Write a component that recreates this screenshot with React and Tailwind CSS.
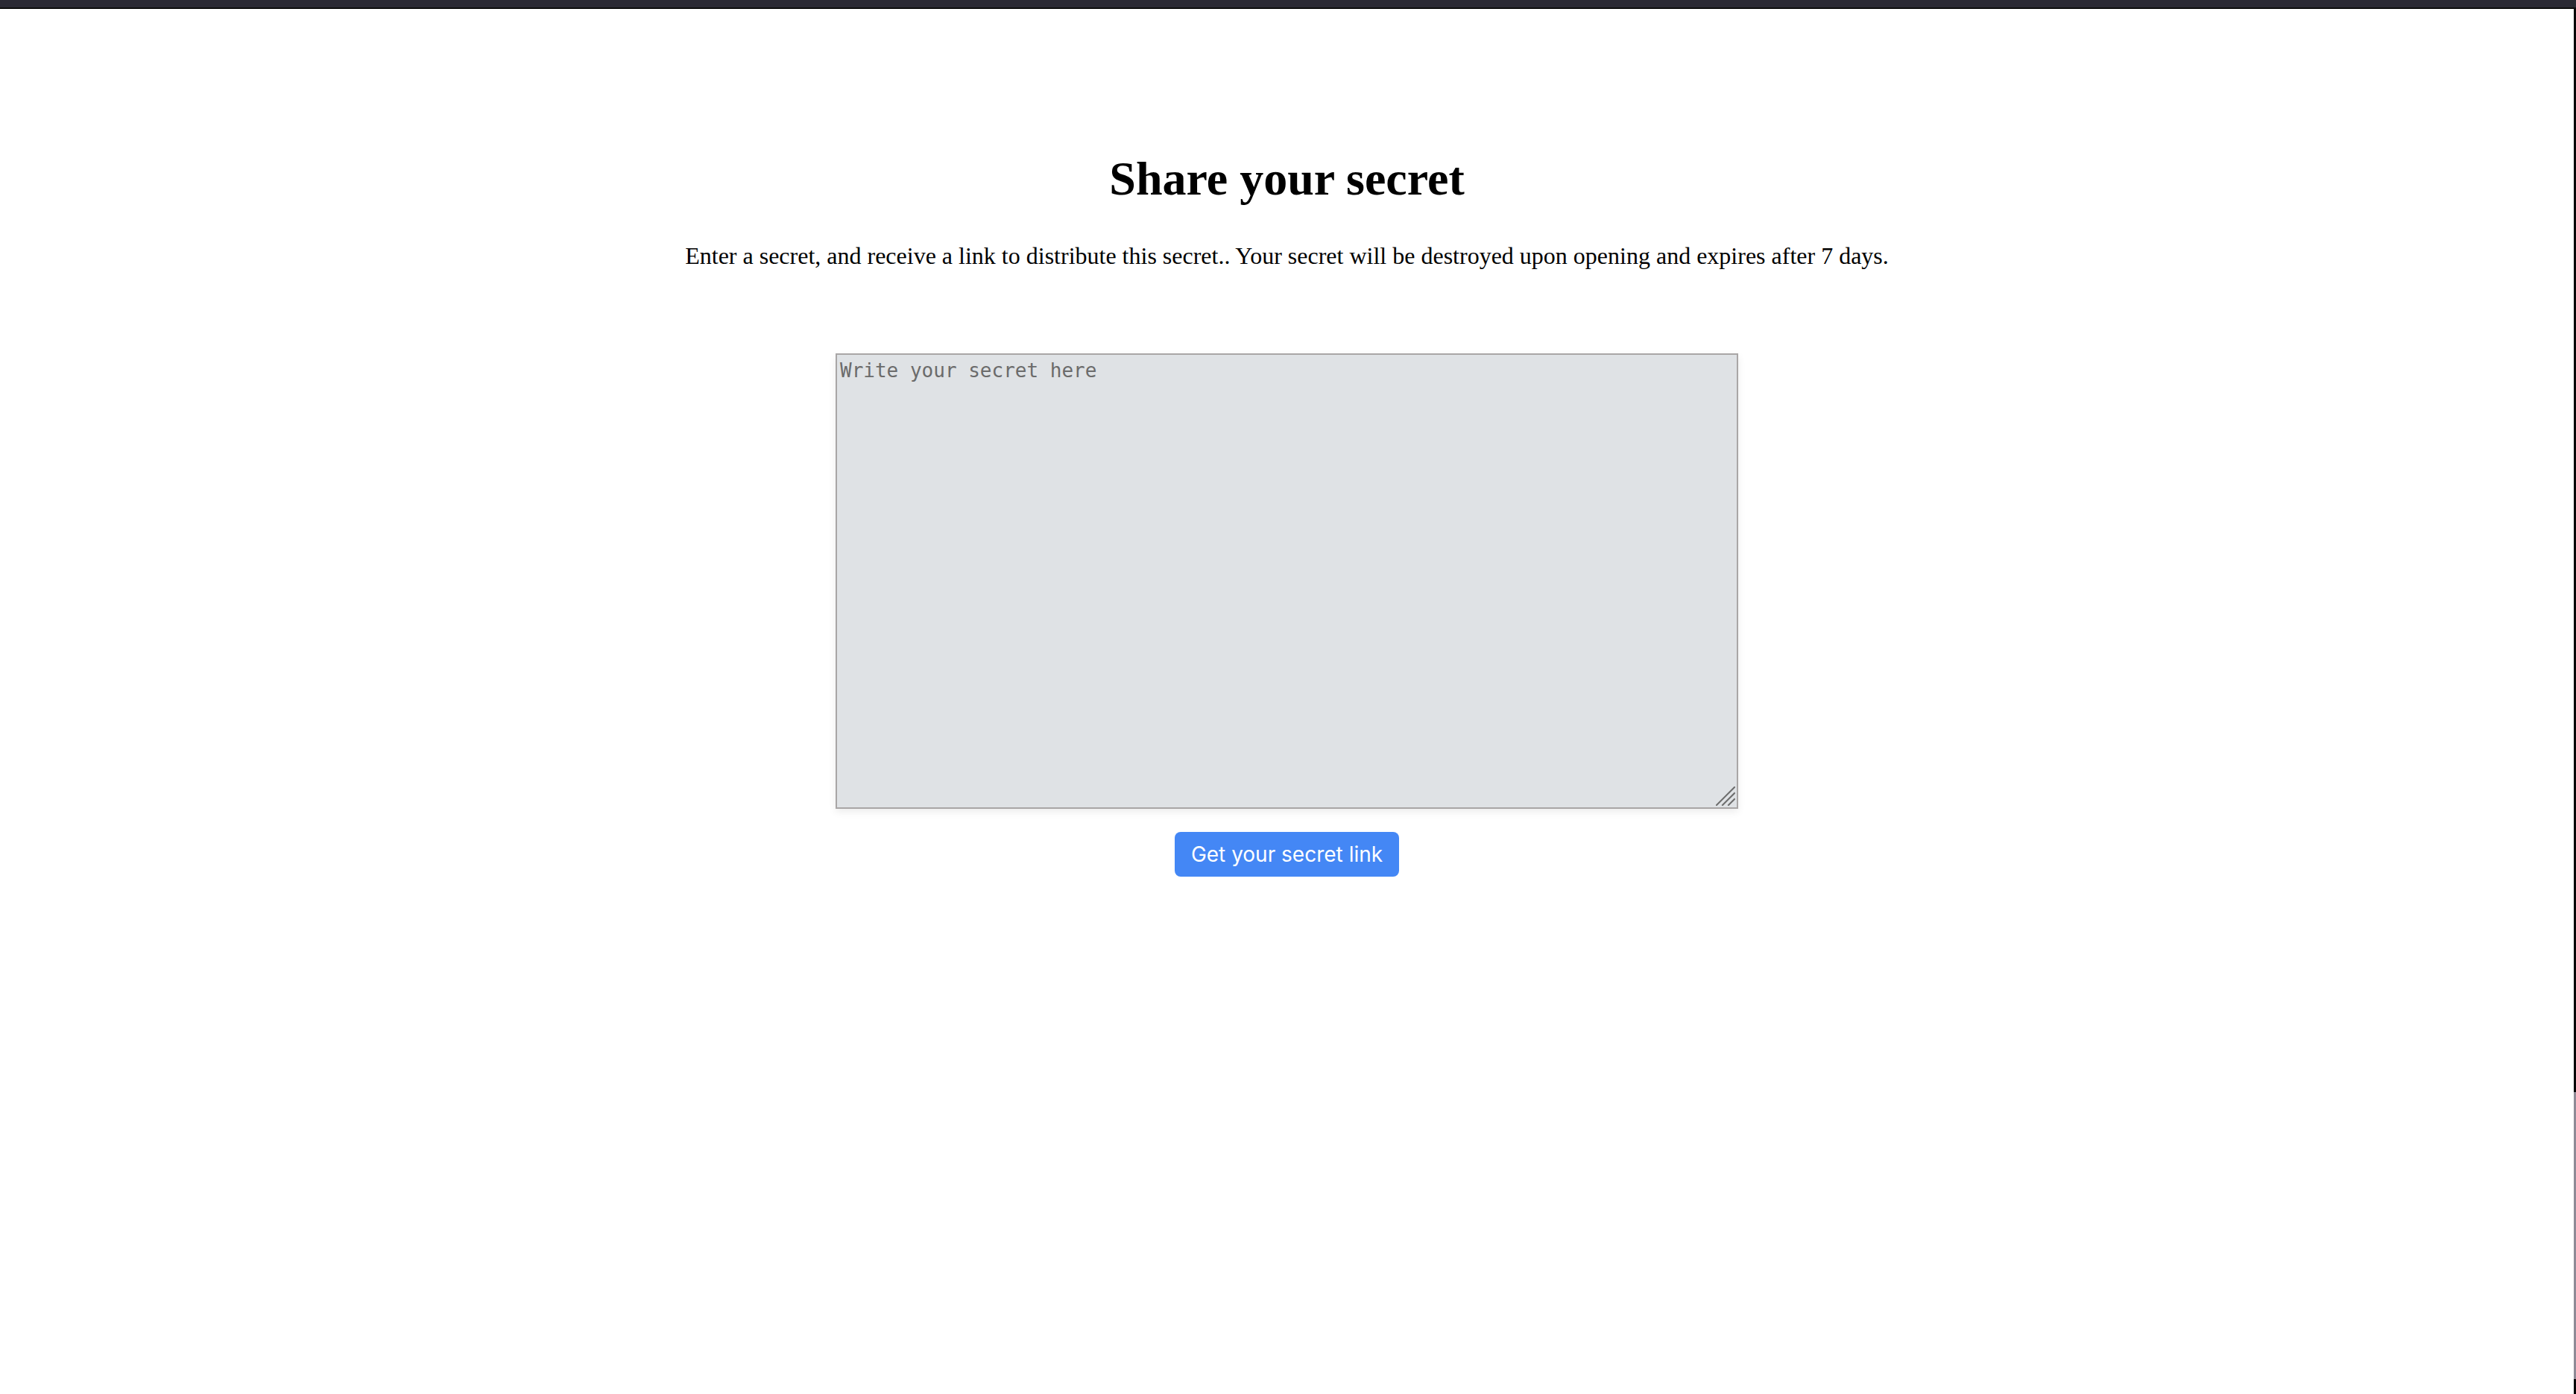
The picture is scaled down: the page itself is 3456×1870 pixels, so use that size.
import React from 'react';

const serif = { fontFamily: '"Liberation Serif", "Times New Roman", serif' };

function ResizeGrip() {
  return (
    <svg width="26" height="26" viewBox="0 0 26 26" className="pointer-events-none absolute bottom-[4px] right-[4px]">
      <g stroke="#6d6d6d" strokeWidth="2" strokeLinecap="square">
        <line x1="1" y1="25" x2="25" y2="1" />
        <line x1="9" y1="25" x2="25" y2="9" />
        <line x1="17" y1="25" x2="25" y2="17" />
      </g>
    </svg>
  );
}

export default function App() {
  return (
    <div className="flex h-[1870px] flex-col overflow-hidden bg-white">
      {/* window chrome edge */}
      <div className="h-[10px] bg-[#2a2933]" />
      <div className="h-[2px] bg-[#0c0c0c]" />

      <div className="flex flex-1">
        <main className="flex flex-1 flex-col items-center pt-[191px]" style={serif}>
          <h1 className="text-[64px] font-bold leading-[74px] text-black">Share your secret</h1>
          <p className="mt-[48px] text-[32px] leading-[37px] text-black">
            Enter a secret, and receive a link to distribute this secret.. Your secret will be destroyed upon opening and expires after 7 days.
          </p>

          <div className="relative mt-[112px] h-[611px] w-[1211px] shadow-[0_4px_10px_rgba(0,0,0,0.08)]">
            <textarea
              placeholder="Write your secret here"
              className="block h-full w-full resize-none border-2 border-[#a9a6a6] bg-[#dfe2e5] px-[4px] pt-[2px] font-['DejaVu_Sans_Mono',monospace] text-[26px] text-black placeholder:text-[#6b6b6b]"
            />
            <ResizeGrip />
          </div>

          <button className="mt-[31px] h-[60px] rounded-[8px] bg-[#4487f5] px-[22px] font-['Inter',sans-serif] text-[28px] text-white">
            Get your secret link
          </button>
        </main>

        <div className="flex w-[3px] flex-col">
          <div className="h-[1453px] bg-[#060606]" />
          <div className="flex-1 bg-[#8e8a96]" />
          <div className="h-[20px] bg-[#060606]" />
        </div>
      </div>
    </div>
  );
}
